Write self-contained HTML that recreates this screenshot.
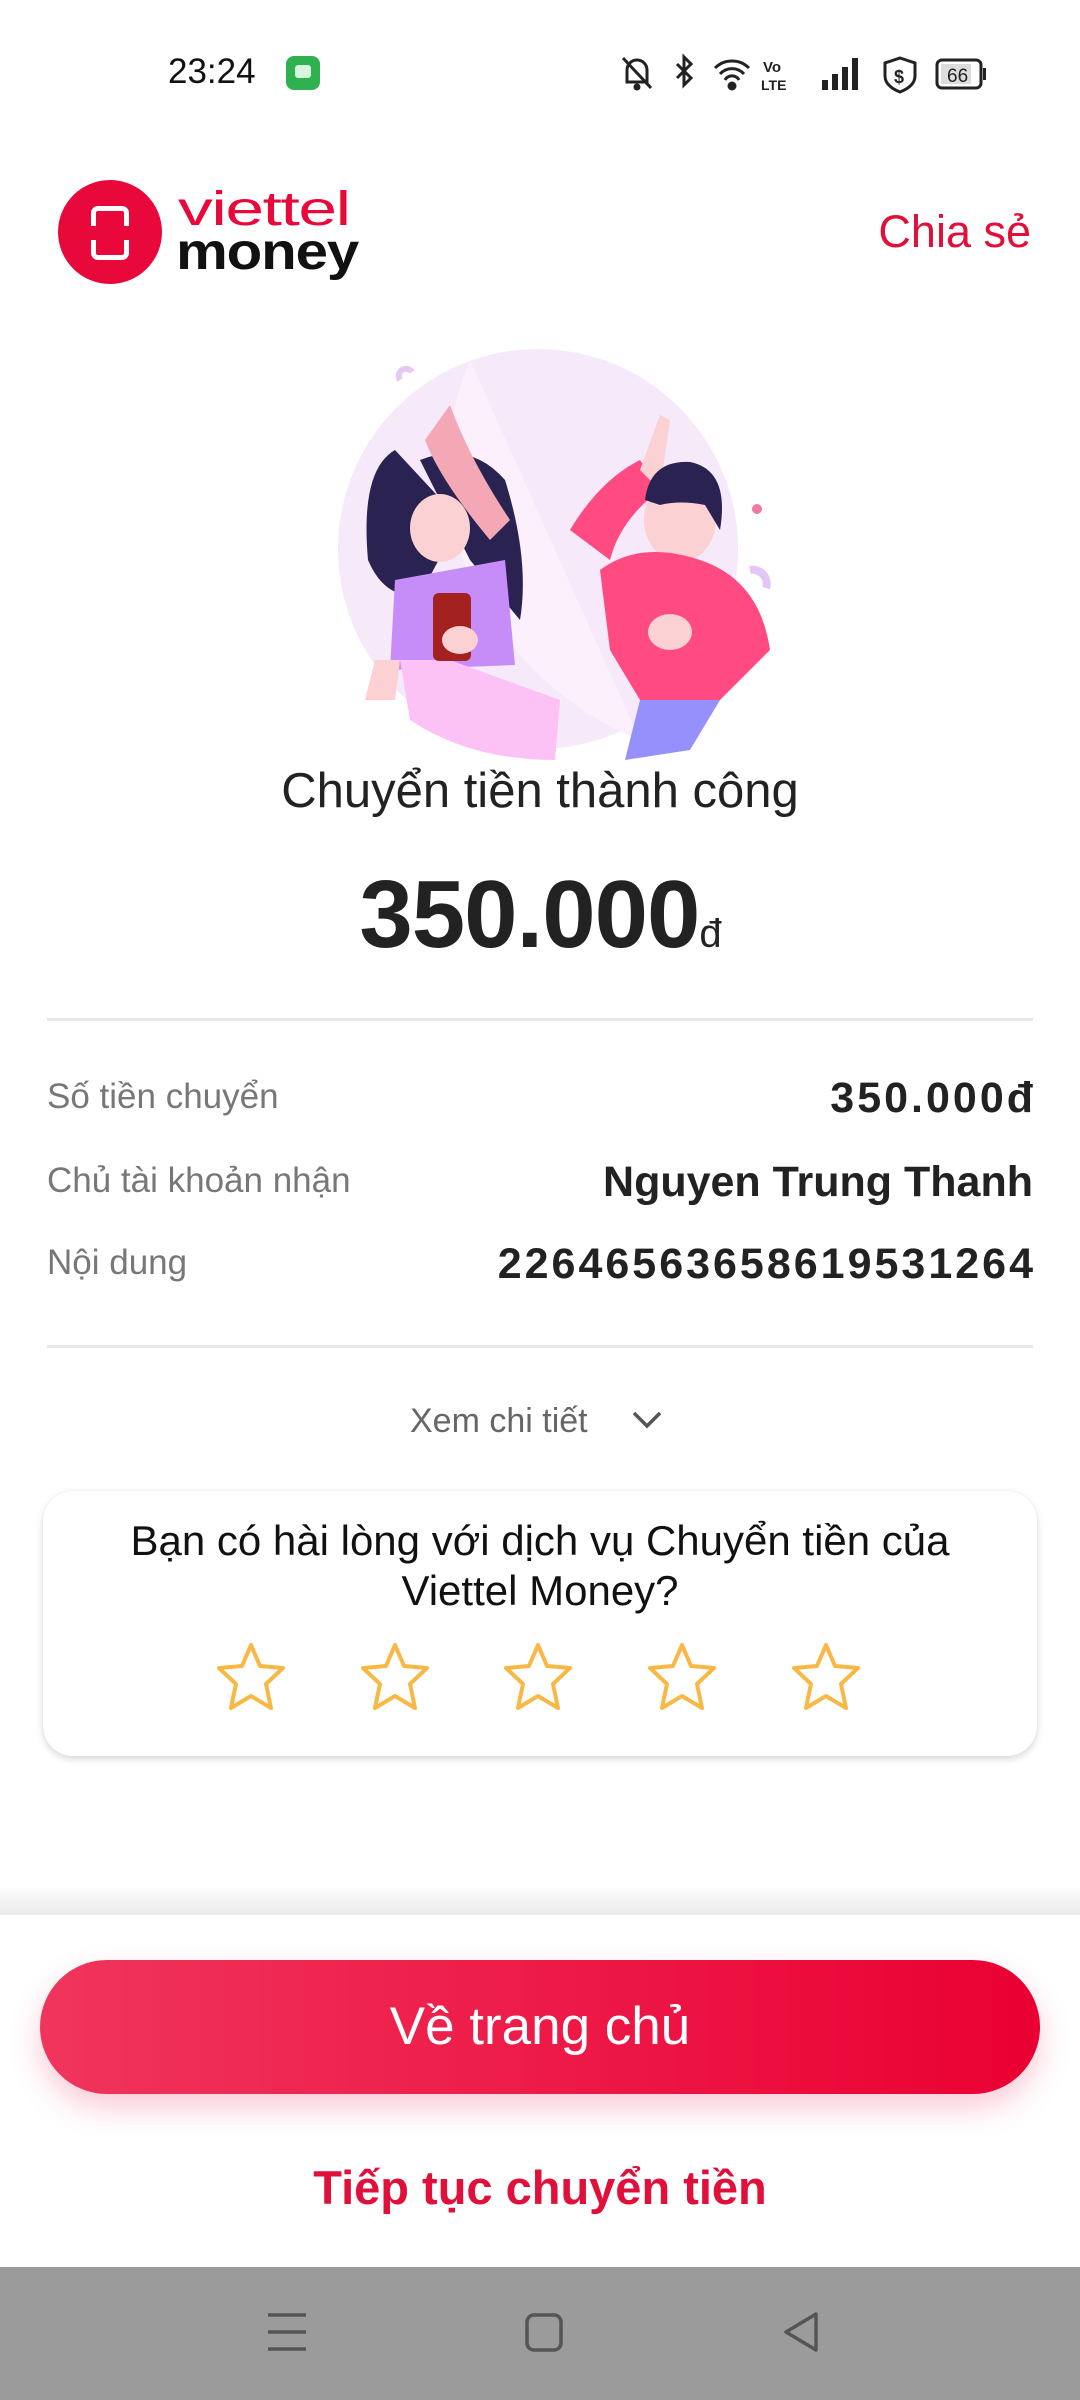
<!DOCTYPE html>
<html><head><meta charset="utf-8"><style>
*{margin:0;padding:0;box-sizing:border-box}
body{width:1080px;height:2400px;background:#fff;font-family:"Liberation Sans",sans-serif;position:relative;overflow:hidden;color:#222}
.a{position:absolute;white-space:nowrap}
</style></head><body>
<div class="a" style="left:168px;top:52px;font-size:35px;color:#111">23:24</div>
<div class="a" style="left:286px;top:56px;width:34px;height:34px;border-radius:8px;background:#2fb14f"><div style="position:absolute;left:9px;top:9px;width:16px;height:13px;background:#d8f5dd;border-radius:3px"></div></div>
<svg class="a" style="left:615px;top:52px" width="400" height="42" viewBox="0 0 400 42" fill="none" stroke="#222" stroke-width="3">
 <path d="M12 30 V18 a10 10 0 0 1 20 0 V30 Z M8 6 L36 36" /><circle cx="22" cy="35" r="2" fill="#222"/>
 <path d="M62 12 L76 26 L69 33 V5 L76 12 L62 26"/>
 <path d="M100 16 a24 24 0 0 1 34 0 M105 22 a16 16 0 0 1 24 0 M110 28 a8 8 0 0 1 14 0"/><circle cx="117" cy="34" r="3" fill="#222"/>
 <text x="148" y="20" font-size="15" fill="#222" stroke="none" font-weight="bold">Vo</text><text x="146" y="38" font-size="14" fill="#222" stroke="none" font-weight="bold">LTE</text>
 <g fill="#222" stroke="none"><rect x="207" y="28" width="6" height="10"/><rect x="217" y="22" width="6" height="16"/><rect x="227" y="15" width="6" height="23"/><rect x="237" y="6" width="6" height="32"/></g>
 <path d="M285 6 L300 11 V24 Q300 34 285 40 Q270 34 270 24 V11 Z"/><text x="279" y="31" font-size="18" fill="#222" stroke="none" font-weight="bold">$</text>
 <rect x="322" y="8" width="44" height="28" rx="5"/><rect x="326" y="12" width="30" height="20" fill="#ddd" stroke="none"/><rect x="368" y="16" width="3" height="12" fill="#222" stroke="none"/>
 <text x="332" y="30" font-size="19" fill="#222" stroke="none">66</text>
</svg>
<div class="a" style="left:58px;top:180px;width:104px;height:104px;border-radius:50%;background:#e8083a"></div>
<div class="a" style="left:91px;top:206px;width:38px;height:54px;border:5px solid #fff;border-radius:7px"></div>
<div class="a" style="left:87px;top:226px;width:46px;height:14px;background:#e8083a"></div>
<div class="a" style="left:178px;top:182px;font-size:48px;color:#e8083a;letter-spacing:-1px;transform:scaleX(1.45);transform-origin:0 0">viettel</div>
<div class="a" style="left:176px;top:222px;font-size:52px;color:#111;font-weight:bold;letter-spacing:-1px;transform:scaleX(1.12);transform-origin:0 0">money</div>
<div class="a" style="right:49px;top:206px;font-size:45px;color:#e0103a">Chia sẻ</div>
<svg class="a" style="left:330px;top:345px" width="450" height="420" viewBox="330 345 450 420">
 <circle cx="538" cy="549" r="200" fill="#f6e9f9"/>
 <path d="M470 360 Q420 480 480 600 Q540 700 640 740" fill="#fbf0fb" stroke="none"/>
 <path d="M400 380 a6 6 0 0 1 12 -8" stroke="#e7c8f2" stroke-width="6" fill="none"/>
 <circle cx="757" cy="509" r="5" fill="#f07ba0"/>
 <path d="M750 570 a14 14 0 0 1 16 18" stroke="#e3c6f6" stroke-width="8" fill="none"/>
 <path d="M395 450 Q360 470 368 560 Q385 600 420 595 L460 520 Z" fill="#2a2352"/>
 <path d="M420 460 Q470 440 505 480 Q530 560 520 620 L470 560 Z" fill="#2a2352"/>
 <path d="M425 440 L450 405 Q470 460 510 520 L490 540 Q440 480 425 440Z" fill="#f4a7b5"/>
 <ellipse cx="440" cy="528" rx="30" ry="34" fill="#fcd1d4"/>
 <path d="M395 580 L505 560 L515 665 L390 670 Z" fill="#c68cf7"/>
 <path d="M400 660 L450 660 L560 700 L555 760 Q470 760 410 720 Z" fill="#fcc2f6"/>
 <path d="M375 660 L400 660 L395 700 L365 700 Z" fill="#fcd1d4"/>
 <rect x="433" y="593" width="38" height="68" rx="6" fill="#a3221f"/>
 <ellipse cx="460" cy="640" rx="18" ry="14" fill="#fcd1d4"/>
 <path d="M570 530 Q600 480 640 460 L660 490 Q620 520 610 560 Z" fill="#ff4b82"/>
 <path d="M640 470 L660 415 L670 420 L660 490 Z" fill="#fcd1d4"/>
 <ellipse cx="680" cy="520" rx="36" ry="42" fill="#fcd1d4"/>
 <path d="M645 500 Q650 460 690 462 Q730 470 720 530 L705 505 Q680 500 660 505Z" fill="#2a2352"/>
 <path d="M600 570 Q640 540 700 560 Q760 580 770 650 L740 680 L720 700 L640 700 L610 650 Z" fill="#ff4b82"/>
 <path d="M640 700 L720 700 L690 750 L625 760 Z" fill="#9590fc"/>
 <ellipse cx="670" cy="632" rx="22" ry="18" fill="#fcd1d4"/>
</svg>
<div class="a" style="left:0;width:1080px;top:763px;text-align:center;font-size:49px;color:#222">Chuyển tiền thành công</div>
<div class="a" style="left:0;width:1080px;top:860px;text-align:center;font-size:96px;font-weight:bold;color:#222;letter-spacing:-1px">350.000<span style="font-size:40px;font-weight:normal">đ</span></div>
<div class="a" style="left:47px;top:1018px;width:986px;height:3px;background:#e8e8e8"></div>
<div class="a" style="left:47px;top:1077px;font-size:35px;color:#777">Số tiền chuyển</div>
<div class="a" style="right:44px;top:1074px;font-size:43px;font-weight:bold;color:#222;letter-spacing:3px">350.000đ</div>
<div class="a" style="left:47px;top:1161px;font-size:35px;color:#777">Chủ tài khoản nhận</div>
<div class="a" style="right:47px;top:1158px;font-size:43px;font-weight:bold;color:#222">Nguyen Trung Thanh</div>
<div class="a" style="left:47px;top:1243px;font-size:35px;color:#777">Nội dung</div>
<div class="a" style="right:44px;top:1240px;font-size:43px;font-weight:bold;color:#222;letter-spacing:3px">22646563658619531264</div>
<div class="a" style="left:47px;top:1345px;width:986px;height:3px;background:#e8e8e8"></div>
<div class="a" style="left:410px;top:1402px;font-size:34px;color:#666">Xem chi tiết</div>
<svg class="a" style="left:630px;top:1408px" width="34" height="24" viewBox="0 0 34 24"><path d="M4 5 L17 18 L30 5" stroke="#555" stroke-width="3.5" fill="none"/></svg>
<div class="a" style="left:43px;top:1491px;width:994px;height:265px;border-radius:30px;background:#fff;box-shadow:0 3px 8px rgba(0,0,0,0.15),0 0 2px rgba(0,0,0,0.06)"></div>
<div class="a" style="left:43px;width:994px;top:1516px;text-align:center;font-size:42px;line-height:50px;color:#111">Bạn có hài lòng với dịch vụ Chuyển tiền của<br>Viettel Money?</div>
<svg class="a" style="left:200px;top:1640px" width="680" height="80" viewBox="200 1640 680 80" fill="none" stroke="#f8b843" stroke-width="4" stroke-linejoin="round">
 <g id="s"><path d="M251 1645 L260 1666 L283 1668 L266 1684 L271 1708 L251 1696 L231 1708 L236 1684 L219 1668 L242 1666 Z"/></g>
 <use href="#s" x="144"/><use href="#s" x="287"/><use href="#s" x="431"/><use href="#s" x="575"/>
</svg>
<div class="a" style="left:0;top:1885px;width:1080px;height:32px;background:linear-gradient(#fff,#e9e9e9)"></div>
<div class="a" style="left:0;top:1915px;width:1080px;height:352px;background:#fff"></div>
<div class="a" style="left:40px;top:1960px;width:1000px;height:134px;border-radius:67px;background:linear-gradient(90deg,#f0355c,#ea0033);box-shadow:0 14px 30px rgba(240,50,90,0.25)"></div>
<div class="a" style="left:40px;width:1000px;top:1996px;text-align:center;font-size:53px;color:#fff">Về trang chủ</div>
<div class="a" style="left:0;width:1080px;top:2160px;text-align:center;font-size:47px;font-weight:bold;color:#e0103a">Tiếp tục chuyển tiền</div>
<div class="a" style="left:0;top:2267px;width:1080px;height:133px;background:#9b9b9b"></div>
<svg class="a" style="left:0;top:2290px" width="1080" height="90" viewBox="0 2290 1080 90" fill="none" stroke="#555" stroke-width="3.5">
 <path d="M268 2315 H306 M268 2332 H306 M268 2349 H306"/>
 <rect x="527" y="2315" width="34" height="35" rx="7"/>
 <path d="M816 2314 L786 2332 L816 2350 Z" stroke-linejoin="round"/>
</svg>
</body></html>
